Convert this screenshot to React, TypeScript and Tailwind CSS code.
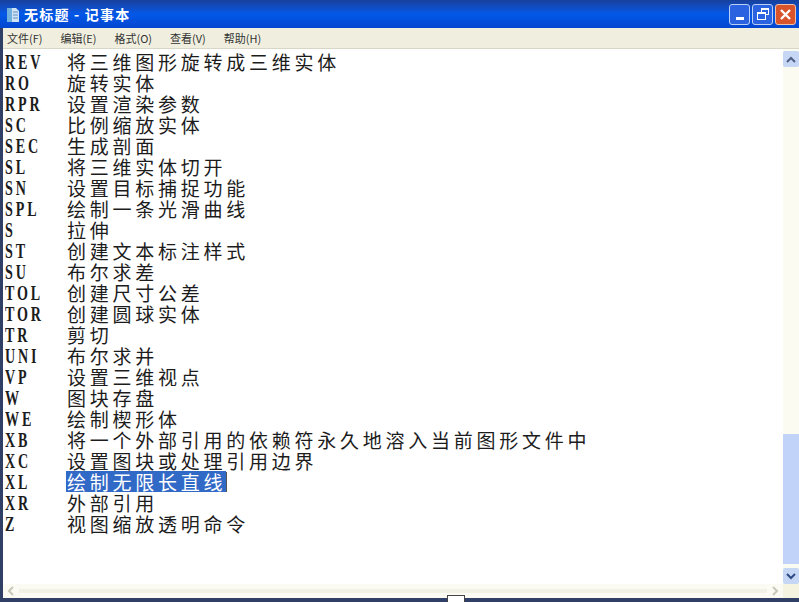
const rows: [string, string][] = [
  ["REV", "将三维图形旋转成三维实体"],
  ["RO", "旋转实体"],
  ["RPR", "设置渲染参数"],
  ["SC", "比例缩放实体"],
  ["SEC", "生成剖面"],
  ["SL", "将三维实体切开"],
  ["SN", "设置目标捕捉功能"],
  ["SPL", "绘制一条光滑曲线"],
  ["S", "拉伸"],
  ["ST", "创建文本标注样式"],
  ["SU", "布尔求差"],
  ["TOL", "创建尺寸公差"],
  ["TOR", "创建圆球实体"],
  ["TR", "剪切"],
  ["UNI", "布尔求并"],
  ["VP", "设置三维视点"],
  ["W", "图块存盘"],
  ["WE", "绘制楔形体"],
  ["XB", "将一个外部引用的依赖符永久地溶入当前图形文件中"],
  ["XC", "设置图块或处理引用边界"],
  ["XL", "绘制无限长直线"],
  ["XR", "外部引用"],
  ["Z", "视图缩放透明命令"],
];

const menus = ["文件(F)", "编辑(E)", "格式(O)", "查看(V)", "帮助(H)"];

function Row({ code, text }: { code: string; text: string }) {
  const selected = code === "XL";
  return (
    <div className="flex h-[21px] items-center">
      <span className="w-[61px] shrink-0 pt-[1px]">
        <span className="inline-block origin-left scale-x-[0.64] font-['Liberation_Serif',serif] text-[22px] leading-[20px] font-bold tracking-[4.5px] text-[#1c1c1c]">
          {code}
        </span>
      </span>
      <span
        className={
          selected
            ? "bg-[#3169c6] pl-[1px] text-[19px] leading-[21px] tracking-[3.75px] text-white"
            : "pl-[1px] text-[19px] leading-[21px] tracking-[3.75px] text-[#1c1c1c]"
        }
      >
        {text}
      </span>
      {selected && <span className="h-[20px] w-[1px] bg-[#555]" />}
    </div>
  );
}

export default function App() {
  return (
    <div className="relative flex h-[602px] w-[799px] flex-col overflow-hidden bg-[#2f3f66] font-['Noto_Sans_CJK_SC',sans-serif]">
      {/* title bar */}
      <div className="flex h-[28px] shrink-0 items-center bg-gradient-to-b from-[#17409c] via-[#0258e8] to-[#0346d0] pl-[5px] pr-[3px]">
        <svg width="16" height="17" viewBox="0 0 16 17" className="shrink-0">
          <path d="M2 2h9l3 3v11H2z" fill="#cfe3f4" />
          <path d="M2 2h5v14H2z" fill="#6fb0dc" />
          <path d="M8 6h5M8 9h5M8 12h5" stroke="#5d8fc0" strokeWidth="1" />
        </svg>
        <span className="ml-[3px] text-[14px] font-bold tracking-[1.2px] text-white">无标题 - 记事本</span>
        <div className="ml-auto flex gap-[2px]">
          <div className="flex h-[21px] w-[21px] items-end justify-center rounded-[3px] border border-[#bcd0f5] bg-[#2a62e0] pb-[4px]">
            <div className="h-[3px] w-[8px] bg-white" />
          </div>
          <div className="relative h-[21px] w-[21px] rounded-[3px] border border-[#bcd0f5] bg-[#2a62e0]">
            <div className="absolute left-[8px] top-[3px] h-[7px] w-[8px] border border-t-2 border-white" />
            <div className="absolute left-[4px] top-[7px] h-[8px] w-[9px] border border-t-2 border-white bg-[#2a62e0]" />
          </div>
          <div className="flex h-[21px] w-[21px] items-center justify-center rounded-[3px] border border-[#f0c0a8] bg-[#d9542b]">
            <svg width="13" height="13" viewBox="0 0 13 13">
              <path d="M2 2l9 9M11 2l-9 9" stroke="#fff" strokeWidth="2.4" />
            </svg>
          </div>
        </div>
      </div>

      <div className="flex min-h-0 flex-1 flex-col pb-[4px] pl-[3px]">
        {/* menu bar */}
        <div className="flex h-[21px] shrink-0 items-center gap-[18px] border-b border-[#d8d6c6] bg-[#f0efdf] pl-[4px] text-[11px] text-[#333]">
          {menus.map((m) => (
            <span key={m}>{m}</span>
          ))}
        </div>

        <div className="flex min-h-0 flex-1 bg-white">
          {/* text */}
          <div className="flex min-w-0 flex-1 flex-col">
            <div className="min-h-0 flex-1 overflow-hidden pl-[2px] pt-[2px]">
              {rows.map(([code, text]) => (
                <Row key={code} code={code} text={text} />
              ))}
            </div>
            {/* horizontal scrollbar */}
            <div className="flex h-[14px] shrink-0 items-center bg-[#fbfbf4]">
              <div className="flex h-full w-[16px] items-center justify-center text-[#c8c8b8]">
                <svg width="8" height="10" viewBox="0 0 8 10">
                  <path d="M6 1L2 5l4 4" fill="none" stroke="currentColor" strokeWidth="2" />
                </svg>
              </div>
              <div className="h-[4px] flex-1 bg-[#f1f1e6]" />
              <div className="flex h-full w-[16px] items-center justify-center text-[#c8c8b8]">
                <svg width="8" height="10" viewBox="0 0 8 10">
                  <path d="M2 1l4 4-4 4" fill="none" stroke="currentColor" strokeWidth="2" />
                </svg>
              </div>
            </div>
          </div>

          {/* vertical scrollbar */}
          <div className="flex w-[16px] shrink-0 flex-col bg-[#fbfbf1] pt-[2px]">
            <div className="flex h-[16px] shrink-0 items-center justify-center rounded-[2px] bg-[#c6d6f5]">
              <svg width="10" height="7" viewBox="0 0 10 7">
                <path d="M1 6l4-4 4 4" fill="none" stroke="#4d6185" strokeWidth="2" />
              </svg>
            </div>
            <div className="min-h-0 flex-1" />
            <div className="mb-[4px] h-[130px] shrink-0 bg-[#c2d3fa]" />
            <div className="flex h-[16px] shrink-0 items-center justify-center rounded-[2px] bg-[#c6d6f5]">
              <svg width="10" height="7" viewBox="0 0 10 7">
                <path d="M1 1l4 4 4-4" fill="none" stroke="#2f4a86" strokeWidth="2" />
              </svg>
            </div>
            <div className="h-[14px] shrink-0 bg-[#f5f4e0]" />
          </div>
        </div>
      </div>

      {/* bottom resize notch */}
      <div className="absolute bottom-0 left-[447px] h-[7px] w-[18px] border border-b-0 border-[#444] bg-white" />
    </div>
  );
}
